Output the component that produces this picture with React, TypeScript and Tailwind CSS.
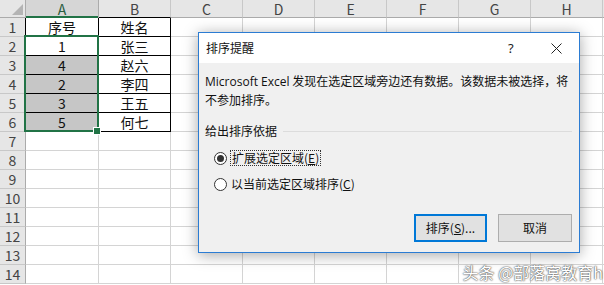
import React from "react";

const COLS = ["A", "B", "C", "D", "E", "F", "G", "H"];
const DATA: Record<number, [string, string]> = {
  1: ["序号", "姓名"],
  2: ["1", "张三"],
  3: ["4", "赵六"],
  4: ["2", "李四"],
  5: ["3", "王五"],
  6: ["5", "何七"],
};

const CJK = '"Noto Sans CJK SC", "Noto Sans", sans-serif';

function Radio({ checked }: { checked: boolean }) {
  return (
    <span className="w-[13px] h-[13px] rounded-full border border-[#333] bg-white flex items-center justify-center shrink-0">
      {checked && <span className="w-[7px] h-[7px] rounded-full bg-[#333]" />}
    </span>
  );
}

function Dialog() {
  return (
    <div className="absolute left-[198px] top-[32px] w-[382px] h-[221px] border border-[#2b7cd3] flex flex-col shadow-[0_2px_14px_rgba(0,0,0,0.35)] text-[12px] text-[#111]">
      <div className="h-[30px] bg-white flex items-center pl-[7px] relative">
        <span>排序提醒</span>
        <span className="absolute left-[309px] top-[6px] text-[13px] text-[#222]" style={{ fontFamily: '"Noto Sans", sans-serif' }}>?</span>
        <svg className="absolute left-[352px] top-[10px]" width="11" height="11" viewBox="0 0 11 11">
          <path d="M0.5 0.5 L10.5 10.5 M10.5 0.5 L0.5 10.5" stroke="#222" strokeWidth="1" />
        </svg>
      </div>
      <div className="flex-1 bg-[#f0f0f0] flex flex-col pl-[6px] pr-[7px] pt-[9px] pb-[10px]">
        <div className="leading-[18px] whitespace-nowrap">
          <span style={{ fontFamily: '"Open Sans", "Noto Sans CJK SC", sans-serif' }}>Microsoft Excel</span> 发现在选定区域旁边还有数据。该数据未被选择，将
          <br />
          不参加排序。
        </div>
        <div className="mt-[13px] h-[18px] flex items-center gap-[6px]">
          <span>给出排序依据</span>
          <div className="flex-1 h-px bg-[#dcdcdc]" />
        </div>
        <div className="mt-[9px] h-[18px] flex items-center pl-[9px] gap-[3px]">
          <Radio checked />
          <span className="border border-dotted border-[#333] px-px leading-[14px]">
            扩展选定区域(<span className="underline">E</span>)
          </span>
        </div>
        <div className="mt-[8px] h-[18px] flex items-center pl-[9px] gap-[4px]">
          <Radio checked={false} />
          <span>
            以当前选定区域排序(<span className="underline">C</span>)
          </span>
        </div>
        <div className="mt-auto flex justify-end gap-[11px]">
          <button className="w-[73px] h-[28px] bg-[#e1e1e1] border-2 border-[#0078d7] text-[12px] flex items-center justify-center">
            排序(<span className="underline">S</span>)...
          </button>
          <button className="w-[74px] h-[28px] bg-[#e1e1e1] border border-[#adadad] text-[12px] flex items-center justify-center">
            取消
          </button>
        </div>
      </div>
    </div>
  );
}

export default function App() {
  const rows = Array.from({ length: 14 }, (_, i) => i + 1);
  return (
    <div className="relative w-[604px] h-[285px] overflow-hidden bg-white" style={{ fontFamily: CJK }}>
      {/* header row */}
      <div className="flex h-[18px]">
        <div className="w-[26px] shrink-0 bg-[#e6e6e6] border-r border-b border-[#ababab] relative">
          <svg className="absolute right-[2px] bottom-[2px]" width="11" height="11" viewBox="0 0 11 11">
            <path d="M11 0 L11 11 L0 11 Z" fill="#b4b4b4" />
          </svg>
        </div>
        {COLS.map((c, i) => (
          <div
            key={c}
            className={
              "shrink-0 flex items-center justify-center text-[14px] leading-[14px] border-r " +
              (i === 0
                ? "w-[73px] bg-[#d6d6d6] text-[#2a5d3f] shadow-[inset_0_-2px_0_#217346] border-r-[#ababab]"
                : i === 1
                ? "w-[72px] bg-[#e6e6e6] text-[#444] border-b border-b-black border-r-[#c8c8c8]"
                : "w-[72px] bg-[#e6e6e6] text-[#444] border-b border-b-[#ababab] border-r-[#c8c8c8]")
            }
          >
            {c}
          </div>
        ))}
        <div className="flex-1 bg-[#e6e6e6] border-b border-[#ababab]" />
      </div>
      {rows.map((r) => {
        const d = DATA[r];
        return (
          <div key={r} className="flex h-[19px]">
            <div
              className={
                "w-[26px] shrink-0 bg-[#e6e6e6] border-b border-b-[#c8c8c8] border-r flex items-center justify-center text-[14px] leading-none text-[#444] " +
                (d ? "border-r-black" : "border-r-[#ababab]")
              }
            >
              {r}
            </div>
            {COLS.map((c, i) => {
              const inTable = d && i < 2;
              const gray = i === 0 && r >= 3 && r <= 6;
              return (
                <div
                  key={c}
                  className={
                    "shrink-0 border-r border-b flex items-center justify-center text-[14px] leading-none text-[#111] " +
                    (i === 0 ? "w-[73px] " : "w-[72px] ") +
                    (inTable ? "border-black " : "border-[#d4d4d4] ") +
                    (gray ? "bg-[#c6c6c6]" : "bg-white")
                  }
                >
                  {inTable ? d![i] : ""}
                </div>
              );
            })}
            <div className="flex-1 border-b border-[#d4d4d4]" />
          </div>
        );
      })}
      {/* selection */}
      <div className="absolute left-[24px] top-[35px] w-[75px] h-[97px] border-2 border-[#217346]" />
      <div className="absolute left-[94px] top-[128px] w-[6px] h-[6px] bg-[#217346] border border-white box-content -translate-x-px -translate-y-px" />
      <Dialog />
      <div className="absolute right-[1px] bottom-[5px] text-[16px] leading-none text-white [text-shadow:0_0_2px_#444,0_0_1px_#444]">
        头条 @部落窝教育h
      </div>
    </div>
  );
}
